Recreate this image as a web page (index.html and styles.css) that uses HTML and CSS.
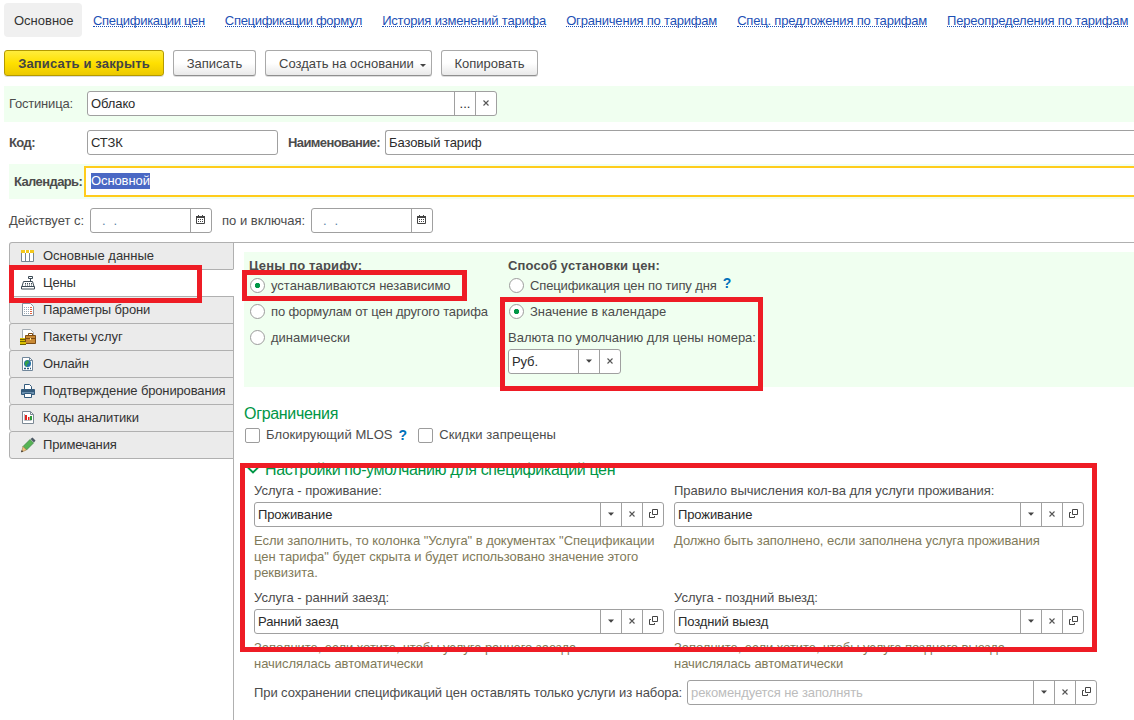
FILE: index.html
```html
<!DOCTYPE html>
<html lang="ru">
<head>
    <meta charset="UTF-8">
    <title>Тариф</title>
    <link rel="stylesheet" href="styles.css">
</head>
<body>
    <svg class="defs">
        <symbol id="arrow" viewBox="0 0 20 23"><path d="M7 9.500h6l-3 3.200z" fill="#444"/></symbol>
        <symbol id="cross" viewBox="0 0 20 23"><path d="M7.500 8.500l5 5m0-5l-5 5" stroke="#555" stroke-width="1.100"/></symbol>
        <symbol id="open" viewBox="0 0 20 23"><path d="M9.500 6.500h5v5h-5zM8 9.500H6.500v5h5V13" fill="none" stroke="#444"/></symbol>
        <symbol id="cal" viewBox="0 0 20 23"><path d="M5.500 7.500h8v7h-8z" fill="none" stroke="#444"/><path d="M5 7h9v2H5zM7 6h1v1H7zM11 6h1v1h-1z" fill="#444"/><path d="M7 10.500h5M7 12.500h5" stroke="#444" stroke-dasharray="1 1"/></symbol>
    </svg>

    <nav class="nav">
        <a class="current">Основное</a>
        <a class="link narrow">Спецификации цен</a>
        <a class="link narrow">Спецификации формул</a>
        <a class="link">История изменений тарифа</a>
        <a class="link">Ограничения по тарифам</a>
        <a class="link">Спец. предложения по тарифам</a>
        <a class="link">Переопределения по тарифам</a>
    </nav>

    <div class="toolbar">
        <button class="btn primary">Записать и закрыть</button>
        <button class="btn save">Записать</button>
        <button class="btn create">Создать на основании<i class="caret"></i></button>
        <button class="btn copy">Копировать</button>
    </div>

    <div class="row hotel">
        <label>Гостиница:</label>
        <div class="field"><span class="value">Облако</span><b class="dots">...</b><svg><use href="#cross"/></svg></div>
    </div>
    <div class="row code">
        <label class="bold code-label">Код:</label>
        <div class="field code-field"><span class="value">СТЗК</span></div>
        <label class="bold name-label">Наименование:</label>
        <div class="field name-field"><span class="value">Базовый тариф</span></div>
    </div>
    <div class="row calendar">
        <label class="bold">Календарь:</label>
        <div class="focused"><span class="selected">Основной</span></div>
    </div>
    <div class="row dates">
        <label class="from-label">Действует с:</label>
        <div class="field date"><span class="value mask"><i>.</i><i>.</i></span><svg><use href="#cal"/></svg></div>
        <label class="to-label">по и включая:</label>
        <div class="field date"><span class="value mask"><i>.</i><i>.</i></span><svg><use href="#cal"/></svg></div>
    </div>

    <div class="main">
        <ul class="tabs">
            <li class="wide">
                <svg viewBox="0 0 16 16"><path d="M1.500 2.500h12v11h-12zM5.500 3v10M9.500 3v10" fill="#fff" stroke="#778592"/><path d="M1 2h13v3h-13z" fill="#f3c81c"/><path d="M5 2h1v3h-1zM9 2h1v3h-1z" fill="#fff"/></svg>
                <span>Основные данные</span>
            </li>
            <li class="active">
                <svg viewBox="0 0 16 16"><path d="M8.500 1.500h4v2h-4zM10.500 4v2M3.500 6.500h9l1.500 5h-12zM1.500 11.500h13v2.500h-13z" fill="#fff" stroke="#3c4a55"/><path d="M5 8.500h7M5 10h7" stroke="#3c4a55" stroke-dasharray="1 1"/></svg>
                <span>Цены</span>
            </li>
            <li>
                <svg viewBox="0 0 16 16"><path d="M2.500 1.500h8l3 3v9h-11z" fill="#fff" stroke="#8795a2"/><path d="M4 5.500h5M4 7.500h5M4 9.500h5M4 11.500h5" stroke="#9aa8b5" stroke-dasharray="1 1"/><path d="M10 5.500h2M10 7.500h2M10 9.500h2M10 11.500h2" stroke="#e0603c"/></svg>
                <span>Параметры брони</span>
            </li>
            <li class="wide">
                <svg viewBox="0 0 16 16"><path d="M2.500.5h8l3 3v8h-11z" fill="#fff" stroke="#a3abb2"/><path d="M8.500 6V4.500h4V6" fill="none" stroke="#7d4c13"/><path d="M5.500 6.500h10v8h-10z" fill="#c98a35" stroke="#7d4c13"/><path d="M6 9.500h9" stroke="#7d4c13"/><path d="M10 9h1v2h-1z" fill="#ffe38a"/><path d="M0 9h5v1h-5zM0 11h5v1h-5zM0 13h6v2h-6z" fill="#d9bd00"/><path d="M0 10.500h5M0 12.500h5M0 15.500h6" stroke="#6d6100"/></svg>
                <span>Пакеты услуг</span>
            </li>
            <li>
                <svg viewBox="0 0 16 16"><path d="M2.500 1.500h7l3 3v10h-10z" fill="#fff" stroke="#71879b"/><path d="M9.500 1.500v3h3" fill="none" stroke="#71879b"/><circle cx="7.500" cy="7.500" r="3.500" fill="#2272a8"/><path d="M5 6l3-2 1 3-2 1v3l-2-2z" fill="#35a047"/><path d="M4 12.500h7" stroke="#2c5b80" stroke-width="1.500" stroke-dasharray="2 1"/></svg>
                <span>Онлайн</span>
            </li>
            <li>
                <svg viewBox="0 0 16 16"><path d="M4.500 1.500h5l2 2v3h-7z" fill="#fff" stroke="#345b7c"/><path d="M1.500 6.500h13v5h-13z" fill="#6c91b0" stroke="#345b7c"/><path d="M2 8h12" stroke="#345b7c" stroke-width="2"/><path d="M4.500 10.500h7v4h-7z" fill="#fff" stroke="#345b7c"/></svg>
                <span>Подтверждение бронирования</span>
            </li>
            <li>
                <svg viewBox="0 0 16 16"><path d="M2.500 1.500h8l3 3v9h-11z" fill="#fff" stroke="#7c8995"/><path d="M10.500 1.500v3h3" fill="none" stroke="#7c8995"/><path d="M4.500 4v6.500h7" fill="none" stroke="#b5bdc4"/><path d="M5 5h2v5h-2z" fill="#e3231e"/><path d="M8 7h1.500v3h-1.500z" fill="#e3231e"/><path d="M10 6h2v4h-2z" fill="#2c9a3a"/></svg>
                <span>Коды аналитики</span>
            </li>
            <li>
                <svg viewBox="0 0 16 16"><path d="M10 2.500l3.500 3.500-7 7-3.500-3.500z" fill="#56b454" stroke="#398143" stroke-width=".7"/><path d="M10.500 2l2-1.500 3 3-1.500 2z" fill="#4d5965"/><path d="M3 9.500l3.500 3.500-5 2z" fill="#efc27c" stroke="#9b7b46" stroke-width=".6"/><path d="M1 15.200l.8-2.200 1.400 1.400z" fill="#333"/></svg>
                <span>Примечания</span>
            </li>
        </ul>

        <div class="pane">
            <div class="prices">
                <div class="price-kind">
                    <div class="title">Цены по тарифу:</div>
                    <div class="radio on"><i></i><span>устанавливаются независимо</span></div>
                    <div class="radio tight"><i></i><span>по формулам от цен другого тарифа</span></div>
                    <div class="radio"><i></i><span>динамически</span></div>
                </div>
                <div class="price-way">
                    <div class="title">Способ установки цен:</div>
                    <div class="radio tight"><i></i><span>Спецификация цен по типу дня</span><b class="help up">?</b></div>
                    <div class="radio on"><i></i><span>Значение в календаре</span></div>
                    <div class="currency-label">Валюта по умолчанию для цены номера:</div>
                    <div class="field currency"><span class="value">Руб.</span><svg><use href="#arrow"/></svg><svg><use href="#cross"/></svg></div>
                </div>
            </div>

            <h2 class="limits">Ограничения</h2>
            <div class="checks">
                <i></i><span>Блокирующий MLOS</span><b class="help">?</b>
                <i></i><span>Скидки запрещены</span>
            </div>

            <h2 class="defaults"><svg viewBox="0 0 12 8"><path d="M1 1.500l5 5 5-5" fill="none" stroke="#009646" stroke-width="1.800"/></svg><span>Настройки по-умолчанию для спецификаций цен</span></h2>
            <div class="services">
                <div class="service">
                    <label>Услуга - проживание:</label>
                    <div class="field"><span class="value">Проживание</span><svg><use href="#arrow"/></svg><svg><use href="#cross"/></svg><svg><use href="#open"/></svg></div>
                    <p>Если заполнить, то колонка "Услуга" в документах "Спецификации цен тарифа" будет скрыта и будет использовано значение этого реквизита.</p>
                </div>
                <div class="service">
                    <label>Правило вычисления кол-ва для услуги проживания:</label>
                    <div class="field"><span class="value">Проживание</span><svg><use href="#arrow"/></svg><svg><use href="#cross"/></svg><svg><use href="#open"/></svg></div>
                    <p>Должно быть заполнено, если заполнена услуга проживания</p>
                </div>
                <div class="service">
                    <label>Услуга - ранний заезд:</label>
                    <div class="field"><span class="value">Ранний заезд</span><svg><use href="#arrow"/></svg><svg><use href="#cross"/></svg><svg><use href="#open"/></svg></div>
                    <p>Заполните, если хотите, чтобы услуга раннего заезда<br>начислялась автоматически</p>
                </div>
                <div class="service">
                    <label>Услуга - поздний выезд:</label>
                    <div class="field"><span class="value">Поздний выезд</span><svg><use href="#arrow"/></svg><svg><use href="#cross"/></svg><svg><use href="#open"/></svg></div>
                    <p>Заполните, если хотите, чтобы услуга позднего выезда<br>начислялась автоматически</p>
                </div>
            </div>
            <div class="set">
                <label>При сохранении спецификаций цен оставлять только услуги из набора:</label>
                <div class="field"><span class="value placeholder">рекомендуется не заполнять</span><svg><use href="#arrow"/></svg><svg><use href="#cross"/></svg><svg><use href="#open"/></svg></div>
            </div>
        </div>
    </div>

    <div class="mark mark-tab"></div>
    <div class="mark mark-kind"></div>
    <div class="mark mark-way"></div>
    <div class="mark mark-defaults"></div>
</body>
</html>
```

FILE: styles.css
```css
* {
    box-sizing: border-box;
}
body {
    margin: 0;
    width: 1134px;
    height: 720px;
    overflow: hidden;
    background: #fff;
    color: #4c4c4c;
    font: 13px/16px "Liberation Sans", Arial, sans-serif;
}
a, label, span, .title, .currency-label {
    white-space: nowrap;
}
i, b {
    font-style: normal;
    font-weight: normal;
}
.defs {
    position: absolute;
    width: 0;
    height: 0;
}

/* navigation */
.nav {
    display: flex;
    align-items: center;
    gap: 20px;
    height: 37px;
    padding: 3px 0 0 4px;
}
.current {
    height: 34px;
    width: 78px;
    margin-right: -9px;
    padding: 10px 10px 0;
    border-radius: 4px;
    background: #f0f0f0;
    color: #333;
}
.link {
    height: 14px;
    line-height: 15px;
    letter-spacing: -.19px;
    color: #1d50b5;
    border-bottom: 1px dotted #1d50b5;
}
.narrow {
    letter-spacing: -.31px;
}

/* buttons */
.toolbar {
    display: flex;
    gap: 9px;
    padding: 13px 0 0 4px;
}
.btn {
    display: flex;
    align-items: center;
    justify-content: center;
    height: 26px;
    padding: 2px 0 0;
    border: 1px solid #a9a9a9;
    border-bottom-color: #8f8f8f;
    border-radius: 3px;
    background: linear-gradient(#fff 50%, #e9e9e9);
    box-shadow: 0 1px 0 #ddd;
    color: #444;
    font: inherit;
}
.primary {
    width: 160px;
    border-color: #b49a00;
    background: linear-gradient(#ffec3d, #ffe000 50%, #ecc900);
    font-weight: bold;
    letter-spacing: .16px;
}
.save { width: 83px; }
.create {
    width: 167px;
    justify-content: flex-start;
    padding-left: 13px;
}
.copy { width: 97px; }
.caret {
    margin: 2px 0 0 6px;
    border: 3px solid transparent;
    border-top-color: #444;
    border-bottom: 0;
}

/* fields */
.field {
    display: flex;
    height: 25px;
    border: 1px solid #a0a0a0;
    border-radius: 3px;
    background: #fff;
    color: #2b2b2b;
}
.value {
    flex: 1;
    padding: 4px 3px 0;
    letter-spacing: -.1px;
}
.field svg, .dots {
    width: 21px;
    height: 23px;
    border-left: 1px solid #a0a0a0;
}
.dots {
    padding-top: 4px;
    text-align: center;
}
.placeholder {
    color: #bcbcbc;
}

/* header form */
.row {
    display: flex;
}
.bold {
    font-weight: bold;
    letter-spacing: -.6px;
}
.hotel {
    height: 36px;
    margin: 10px 0 0 4px;
    padding: 5px 0 0 5px;
    background: #f0fff0;
}
.hotel label {
    width: 78px;
    padding-top: 5px;
    letter-spacing: -.2px;
}
.hotel .field {
    width: 410px;
}
.code {
    padding: 8px 0 0 9px;
}
.code label {
    padding-top: 5px;
}
.code-label { width: 78px; }
.code-field { width: 191px; }
.name-label {
    width: 97px;
    margin-left: 10px;
}
.name-field {
    flex: 1;
    border-right: 0;
    border-radius: 3px 0 0 3px;
}
.calendar {
    height: 35px;
    margin: 9px 0 0 9px;
    padding: 2px 0 0 5px;
    background: #f0fff0;
}
.calendar label {
    width: 70px;
    padding-top: 8px;
}
.focused {
    flex: 1;
    height: 31px;
    padding: 5px;
    border: 2px solid #ffcc1c;
    border-right: 0;
    background: #fff;
}
.selected {
    display: inline-block;
    background: #4a68c4;
    color: #fff;
    letter-spacing: -.1px;
}
.dates {
    padding: 9px 0 0 9px;
}
.dates label {
    padding-top: 5px;
}
.from-label { width: 81px; }
.to-label {
    width: 89px;
    margin-left: 10px;
}
.date {
    width: 122px;
}
.mask {
    display: flex;
    gap: 8px;
    padding-left: 11px;
    color: #5a83a8;
}

/* side tabs */
.main {
    display: flex;
    height: 478px;
    margin: 9px 0 0 9px;
}
.tabs {
    width: 225px;
    margin: 0;
    padding: 0;
    list-style: none;
    background: linear-gradient(#b0b0b0, #b0b0b0) right / 1px 100% no-repeat;
    color: #333;
    letter-spacing: -.14px;
}
.tabs li {
    display: flex;
    align-items: center;
    gap: 7px;
    height: 27px;
    padding-left: 10px;
    border: 1px solid #b0b0b0;
    border-bottom: 0;
    border-radius: 3px 0 0 3px;
    background: #ebebeb;
}
.tabs li:last-child {
    height: 28px;
    border-bottom: 1px solid #b0b0b0;
}
.tabs .active {
    background: #fff;
    border-right-color: #fff;
}
.tabs .wide {
    letter-spacing: 0;
}
.tabs svg {
    width: 16px;
    height: 16px;
}

/* tab content */
.pane {
    flex: 1;
    padding: 9px 0 0 10px;
    border-top: 1px solid #b0b0b0;
}
.prices {
    display: flex;
    height: 135px;
    padding: 6px 0 0 6px;
    background: #f0fff0;
}
.price-kind {
    width: 258px;
}
.title {
    margin-left: -1px;
    font-weight: bold;
    letter-spacing: .15px;
}
.price-way .title {
    margin-left: 0;
}
.radio {
    display: flex;
    align-items: center;
    height: 26px;
}
.radio:nth-child(2) {
    margin-top: -2px;
}
.radio span {
    padding-top: 1px;
}
.radio i {
    width: 15px;
    height: 15px;
    margin-right: 6px;
    border: 1px solid #9c9c9c;
    border-radius: 50%;
    background: #fff;
}
.radio.on i {
    background: radial-gradient(circle, #009646 2.3px, #fff 3px);
}
.tight {
    letter-spacing: -.13px;
}
.price-way .radio {
    padding-left: 1px;
}
.help {
    color: #0070ba;
    font-size: 14px;
    font-weight: bold;
}
.up {
    margin: -4px 0 0 6px;
}
.currency-label {
    margin-top: 6px;
}
.currency {
    width: 113px;
    margin-top: 3px;
}
h2 {
    margin: 0;
    color: #009646;
    font-size: 16px;
    font-weight: normal;
    line-height: 18px;
}
.limits {
    margin-top: 18px;
    letter-spacing: -.32px;
}
.checks {
    display: flex;
    align-items: center;
    height: 24px;
    letter-spacing: .08px;
}
.checks i {
    width: 15px;
    height: 15px;
    margin: 0 6px 0 1px;
    border: 1px solid #9c9c9c;
    border-radius: 2px;
}
.checks .help {
    margin: 0 10px 0 6px;
}
.defaults {
    display: flex;
    align-items: center;
    gap: 6px;
    margin: 14px 0 0 3px;
    letter-spacing: -.36px;
}
.defaults svg {
    width: 12px;
    height: 8px;
}
.services {
    display: grid;
    grid-template-columns: 410px 410px;
    grid-template-rows: 107px 81px;
    column-gap: 10px;
    margin: 4px 0 0 10px;
}
.service label {
    display: block;
    padding-bottom: 3px;
}
.service p {
    margin: 6px 0 0;
    color: #7f7a59;
    letter-spacing: -.05px;
}
.set {
    display: flex;
    margin: 9px 0 0 10px;
}
.set label {
    width: 433px;
    padding-top: 5px;
    letter-spacing: -.09px;
}
.set .field {
    width: 410px;
}

/* red frames over the form */
.mark {
    position: absolute;
    border: 5px solid #ee1c25;
}
.mark-tab { left: 9px; top: 265px; width: 193px; height: 38px; }
.mark-kind { left: 242px; top: 270px; width: 225px; height: 31px; }
.mark-way { left: 500px; top: 297px; width: 263px; height: 94px; }
.mark-defaults { left: 240px; top: 463px; width: 857px; height: 189px; }
```
